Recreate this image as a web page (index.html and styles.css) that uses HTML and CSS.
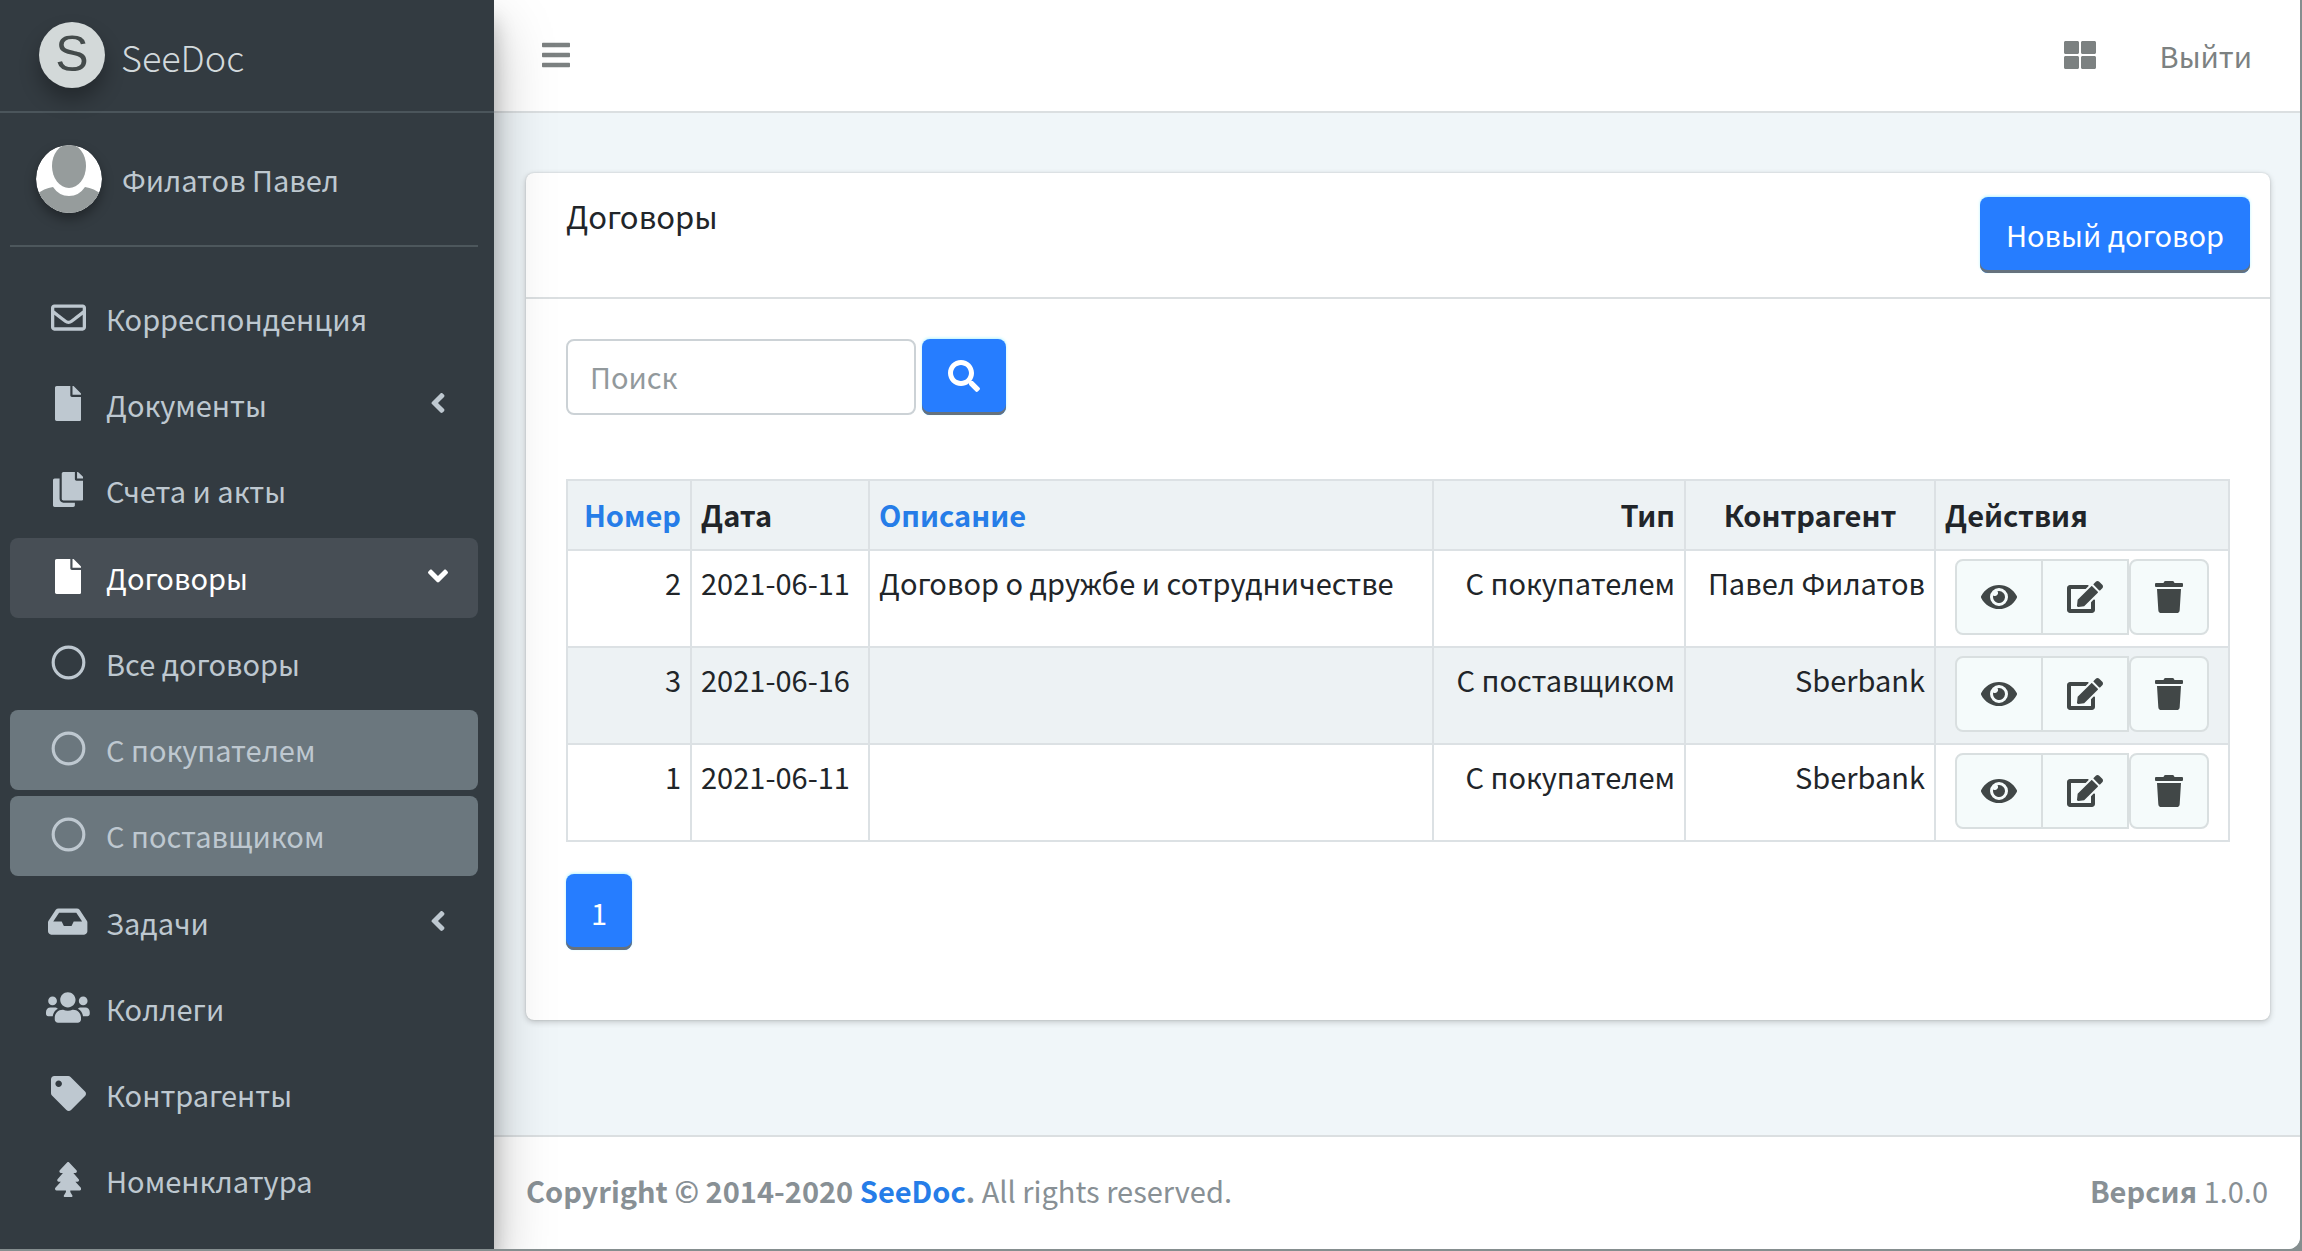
FILE: index.html
```html
<!DOCTYPE html>
<html lang="ru">
<head>
<meta charset="utf-8">
<meta name="viewport" content="width=device-width, initial-scale=1">
<title>SeeDoc — Договоры</title>
<link rel="stylesheet" href="styles.css">
</head>
<body>
<svg class="sprite" aria-hidden="true">
  <symbol id="i-file" viewBox="0 0 384 512"><path d="M224 136V0H24C10.700 0 0 10.700 0 24v464c0 13.300 10.700 24 24 24h336c13.300 0 24-10.700 24-24V160H248c-13.200 0-24-10.800-24-24zm160-14.100v6.100H256V0h6.100c6.400 0 12.500 2.500 17 7l97.900 98c4.500 4.500 7 10.600 7 16.900z"/></symbol>
  <symbol id="i-circle" viewBox="0 0 512 512"><circle cx="256" cy="256" r="224" fill="none" stroke="currentColor" stroke-width="46"/></symbol>
  <symbol id="i-angle-left" viewBox="0 0 256 512"><path d="M31.700 239l136-136c9.400-9.400 24.600-9.400 33.900 0l22.600 22.600c9.400 9.400 9.400 24.600 0 33.900L127.900 256l96.400 96.400c9.400 9.400 9.400 24.600 0 33.900L201.700 409c-9.400 9.400-24.600 9.400-33.900 0l-136-136c-9.500-9.400-9.500-24.600-.1-34z"/></symbol>
  <symbol id="i-angle-down" viewBox="0 0 320 512"><path d="M143 352.300L7 216.300c-9.400-9.400-9.400-24.600 0-33.900l22.600-22.600c9.400-9.400 24.600-9.400 33.900 0l96.400 96.400 96.400-96.400c9.400-9.400 24.600-9.400 33.900 0l22.600 22.600c9.400 9.400 9.400 24.600 0 33.900l-136 136c-9.200 9.400-24.400 9.400-33.800 0z"/></symbol>
  <symbol id="i-eye" viewBox="0 0 576 512"><path d="M572.520 241.400C518.290 135.590 410.930 64 288 64S57.680 135.640 3.480 241.410a32.350 32.350 0 0 0 0 29.190C57.710 376.410 165.070 448 288 448s230.320-71.640 284.520-177.410a32.350 32.350 0 0 0 0-29.190zM288 400a144 144 0 1 1 144-144 143.930 143.930 0 0 1-144 144zm0-240a95.310 95.310 0 0 0-25.310 3.790 47.850 47.850 0 0 1-66.900 66.900A95.780 95.780 0 1 0 288 160z"/></symbol>
  <symbol id="i-edit" viewBox="0 0 576 512"><path d="M402.600 83.200l90.200 90.200c3.800 3.800 3.800 10 0 13.800L274.400 405.600l-92.800 10.300c-12.400 1.400-22.900-9.100-21.500-21.500l10.300-92.800L388.800 83.200c3.800-3.800 10-3.800 13.800 0zm162-22.900l-48.800-48.800c-15.200-15.200-39.900-15.200-55.200 0l-35.400 35.400c-3.800 3.800-3.800 10 0 13.800l90.200 90.200c3.800 3.800 10 3.800 13.800 0l35.400-35.400c15.200-15.300 15.200-40 0-55.200zM384 346.200V448H64V128h229.800c3.200 0 6.200-1.300 8.500-3.500l40-40c7.600-7.600 2.200-20.500-8.500-20.500H48C21.500 64 0 85.500 0 112v352c0 26.500 21.500 48 48 48h352c26.500 0 48-21.500 48-48V306.200c0-10.700-12.900-16-20.500-8.500l-40 40c-2.200 2.300-3.500 5.300-3.500 8.500z"/></symbol>
  <symbol id="i-trash" viewBox="0 0 448 512"><path d="M432 32H312l-9.400-18.700A24 24 0 0 0 281.100 0H166.800a23.720 23.720 0 0 0-21.400 13.300L136 32H16A16 16 0 0 0 0 48v32a16 16 0 0 0 16 16h416a16 16 0 0 0 16-16V48a16 16 0 0 0-16-16zM53.200 467a48 48 0 0 0 47.900 45h245.800a48 48 0 0 0 47.900-45L416 128H32z"/></symbol>
</svg>

<div class="page">
  <aside class="sidebar">
    <a class="brand" href="#">
      <span class="brand-logo" aria-hidden="true">S</span>
      <span class="brand-name">SeeDoc</span>
    </a>
    <div class="user">
      <svg class="avatar" viewBox="0 0 66 68" aria-hidden="true">
        <clipPath id="avatar-clip"><rect width="66" height="68" rx="33" ry="34"/></clipPath>
        <g clip-path="url(#avatar-clip)">
          <rect width="66" height="68" fill="#fff"/>
          <ellipse cx="33" cy="21" rx="17" ry="22" fill="#969c9c"/>
          <path d="M0 50Q8 43 17 42Q23 51 33 51Q43 51 49 42Q58 43 66 50V68H0Z" fill="#969c9c"/>
        </g>
      </svg>
      <a class="user-name" href="#">Филатов Павел</a>
    </div>
    <nav class="menu" aria-label="Главное меню">
      <ul class="menu-list">
        <li><a class="menu-link" href="#"><span class="menu-icon"><svg class="icon" viewBox="0 0 512 512"><path d="M464 64H48C21.490 64 0 85.490 0 112v288c0 26.510 21.490 48 48 48h416c26.510 0 48-21.490 48-48V112c0-26.510-21.490-48-48-48zm0 48v40.805c-22.422 18.259-58.168 46.651-134.587 106.490-16.841 13.247-50.201 45.072-73.413 44.701-23.208.375-56.579-31.459-73.413-44.701C106.180 199.465 70.425 171.067 48 152.805V112h416zM48 400V214.398c22.914 18.251 55.409 43.862 104.938 82.646 21.857 17.205 60.134 55.186 103.062 54.955 42.717.231 80.509-37.199 103.053-54.947 49.528-38.783 82.032-64.401 104.947-82.653V400H48z"/></svg></span>Корреспонденция</a></li>
        <li><a class="menu-link" href="#"><span class="menu-icon"><svg class="icon" viewBox="0 0 384 512"><use href="#i-file"/></svg></span>Документы<svg class="icon menu-arrow" viewBox="0 0 256 512"><use href="#i-angle-left"/></svg></a></li>
        <li><a class="menu-link" href="#"><span class="menu-icon"><svg class="icon" viewBox="0 0 448 512"><path d="M320 448v40c0 13.255-10.745 24-24 24H24c-13.255 0-24-10.745-24-24V120c0-13.255 10.745-24 24-24h72v296c0 30.879 25.121 56 56 56h168zm0-344V0H152c-13.255 0-24 10.745-24 24v368c0 13.255 10.745 24 24 24h272c13.255 0 24-10.745 24-24V128H344c-13.200 0-24-10.800-24-24zm120.971-31.029L375.029 7.029A24 24 0 0 0 358.059 0H352v96h96v-6.059a24 24 0 0 0-7.029-16.970z"/></svg></span>Счета и акты</a></li>
        <li class="menu-group">
          <a class="menu-link is-open" href="#"><span class="menu-icon"><svg class="icon" viewBox="0 0 384 512"><use href="#i-file"/></svg></span>Договоры<svg class="icon menu-arrow" viewBox="0 0 320 512"><use href="#i-angle-down"/></svg></a>
          <ul class="menu-list">
            <li><a class="menu-link" href="#"><span class="menu-icon"><svg class="icon" viewBox="0 0 512 512"><use href="#i-circle"/></svg></span>Все договоры</a></li>
            <li><a class="menu-link is-marked" href="#"><span class="menu-icon"><svg class="icon" viewBox="0 0 512 512"><use href="#i-circle"/></svg></span>С покупателем</a></li>
            <li><a class="menu-link is-marked" href="#"><span class="menu-icon"><svg class="icon" viewBox="0 0 512 512"><use href="#i-circle"/></svg></span>С поставщиком</a></li>
          </ul>
        </li>
        <li><a class="menu-link" href="#"><span class="menu-icon"><svg class="icon" viewBox="0 0 576 512"><path d="M567.938 243.908L462.250 85.374A48.003 48.003 0 0 0 422.311 64H153.689a48 48 0 0 0-39.938 21.374L8.062 243.908A47.994 47.994 0 0 0 0 270.533V400c0 26.510 21.490 48 48 48h480c26.510 0 48-21.490 48-48V270.533a47.994 47.994 0 0 0-8.062-26.625zM162.252 128h251.497l85.333 128H376l-32 64H232l-32-64H76.918l85.334-128z"/></svg></span>Задачи<svg class="icon menu-arrow" viewBox="0 0 256 512"><use href="#i-angle-left"/></svg></a></li>
        <li><a class="menu-link" href="#"><span class="menu-icon"><svg class="icon" viewBox="0 0 640 512"><path d="M96 224c35.300 0 64-28.700 64-64s-28.700-64-64-64-64 28.700-64 64 28.700 64 64 64zm448 0c35.300 0 64-28.700 64-64s-28.700-64-64-64-64 28.700-64 64 28.700 64 64 64zm32 32h-64c-17.600 0-33.500 7.100-45.100 18.600 40.300 22.100 68.900 62 75.100 109.400h66c17.700 0 32-14.300 32-32v-32c0-35.300-28.700-64-64-64zm-256 0c61.900 0 112-50.100 112-112S381.900 32 320 32 208 82.100 208 144s50.100 112 112 112zm76.800 32h-8.300c-20.800 10-43.900 16-68.500 16s-47.600-6-68.500-16h-8.300C179.600 288 128 339.600 128 403.200V432c0 26.500 21.500 48 48 48h288c26.500 0 48-21.500 48-48v-28.800c0-63.600-51.600-115.200-115.200-115.200zm-223.700-13.400C161.500 263.100 145.600 256 128 256H64c-35.300 0-64 28.700-64 64v32c0 17.700 14.300 32 32 32h65.900c6.300-47.400 34.900-87.300 75.200-109.400z"/></svg></span>Коллеги</a></li>
        <li><a class="menu-link" href="#"><span class="menu-icon"><svg class="icon" viewBox="0 0 512 512"><path d="M0 252.118V48C0 21.490 21.490 0 48 0h204.118a48 48 0 0 1 33.941 14.059l211.882 211.882c18.745 18.745 18.745 49.137 0 67.882L293.823 497.941c-18.745 18.745-49.137 18.745-67.882 0L14.059 286.059A48 48 0 0 1 0 252.118zM112 64c-26.510 0-48 21.490-48 48s21.490 48 48 48 48-21.490 48-48-21.490-48-48-48z"/></svg></span>Контрагенты</a></li>
        <li><a class="menu-link" href="#"><span class="menu-icon"><svg class="icon" viewBox="0 0 384 512"><path d="M378.310 378.490L298.420 288h30.630c9.010 0 16.980-5 20.780-13.060 3.800-8.040 2.550-17.260-3.280-24.050L268.420 160h28.890c9.100 0 17.300-5.350 20.860-13.610 3.520-8.130 1.860-17.590-4.240-24.080L203.660 4.830c-6.030-6.450-17.280-6.450-23.320 0L70.060 122.310c-6.100 6.490-7.750 15.950-4.240 24.080C69.380 154.650 77.590 160 86.690 160h28.890l-78.140 90.910c-5.810 6.780-7.060 15.990-3.270 24.040C37.970 283 45.930 288 54.950 288h30.630L5.690 378.490c-6 6.790-7.360 16.090-3.560 24.260 3.750 8.050 12 13.250 21.010 13.250H160v24.450l-30.290 48.400c-5.320 10.640 2.420 23.160 14.310 23.160h95.960c11.890 0 19.630-12.520 14.310-23.160L224 440.450V416h136.860c9.010 0 17.260-5.200 21.010-13.250 3.800-8.170 2.440-17.470-3.560-24.260z"/></svg></span>Номенклатура</a></li>
      </ul>
    </nav>
  </aside>

  <div class="main">
    <header class="topbar">
      <button class="topbar-button" type="button" aria-label="Меню"><svg class="icon" viewBox="0 0 448 512"><path d="M16 132h416c8.837 0 16-7.163 16-16V76c0-8.837-7.163-16-16-16H16C7.163 60 0 67.163 0 76v40c0 8.837 7.163 16 16 16zm0 160h416c8.837 0 16-7.163 16-16v-40c0-8.837-7.163-16-16-16H16c-8.837 0-16 7.163-16 16v40c0 8.837 7.163 16 16 16zm0 160h416c8.837 0 16-7.163 16-16v-40c0-8.837-7.163-16-16-16H16c-8.837 0-16 7.163-16 16v40c0 8.837 7.163 16 16 16z"/></svg></button>
      <div class="topbar-right">
        <button class="topbar-button" type="button" aria-label="Приложения"><svg class="icon" viewBox="0 0 512 512"><path d="M296 32h192c13.255 0 24 10.745 24 24v160c0 13.255-10.745 24-24 24H296c-13.255 0-24-10.745-24-24V56c0-13.255 10.745-24 24-24zm-80 0H24C10.745 32 0 42.745 0 56v160c0 13.255 10.745 24 24 24h192c13.255 0 24-10.745 24-24V56c0-13.255-10.745-24-24-24zM0 296v160c0 13.255 10.745 24 24 24h192c13.255 0 24-10.745 24-24V296c0-13.255-10.745-24-24-24H24c-13.255 0-24 10.745-24 24zm296 184h192c13.255 0 24-10.745 24-24V296c0-13.255-10.745-24-24-24H296c-13.255 0-24 10.745-24 24v160c0 13.255 10.745 24 24 24z"/></svg></button>
        <a class="logout" href="#">Выйти</a>
      </div>
    </header>

    <main class="content">
      <section class="card">
        <div class="card-header">
          <h1 class="card-title">Договоры</h1>
          <button class="btn btn-primary" type="button">Новый договор</button>
        </div>
        <div class="card-body">
          <form class="search">
            <input class="search-input" type="search" placeholder="Поиск" aria-label="Поиск">
            <button class="btn btn-primary" type="submit" aria-label="Найти"><svg class="icon" viewBox="0 0 512 512"><path d="M505 442.700L405.300 343c-4.500-4.500-10.600-7-17-7H372c27.600-35.300 44-79.700 44-128C416 93.100 322.900 0 208 0S0 93.100 0 208s93.100 208 208 208c48.300 0 92.700-16.400 128-44v16.300c0 6.400 2.500 12.500 7 17l99.700 99.700c9.400 9.400 24.600 9.400 33.900 0l28.300-28.300c9.400-9.400 9.400-24.600.1-34zM208 336c-70.700 0-128-57.200-128-128 0-70.700 57.200-128 128-128 70.700 0 128 57.200 128 128 0 70.700-57.200 128-128 128z"/></svg></button>
          </form>

          <table class="grid">
            <colgroup><col class="col-number"><col class="col-date"><col><col class="col-type"><col class="col-partner"><col class="col-actions"></colgroup>
            <thead>
              <tr><th class="right"><a href="#">Номер</a></th><th>Дата</th><th><a href="#">Описание</a></th><th class="right">Тип</th><th class="center">Контрагент</th><th>Действия</th></tr>
            </thead>
            <tbody>
              <tr>
                <td class="right">2</td><td>2021-06-11</td><td>Договор о дружбе и сотрудничестве</td><td class="right">С покупателем</td><td class="right">Павел Филатов</td>
                <td><div class="actions"><button class="action" type="button" aria-label="Просмотр"><svg class="icon" viewBox="0 0 576 512"><use href="#i-eye"/></svg></button><button class="action" type="button" aria-label="Изменить"><svg class="icon" viewBox="0 0 576 512"><use href="#i-edit"/></svg></button><button class="action" type="button" aria-label="Удалить"><svg class="icon" viewBox="0 0 448 512"><use href="#i-trash"/></svg></button></div></td>
              </tr>
              <tr>
                <td class="right">3</td><td>2021-06-16</td><td></td><td class="right">С поставщиком</td><td class="right">Sberbank</td>
                <td><div class="actions"><button class="action" type="button" aria-label="Просмотр"><svg class="icon" viewBox="0 0 576 512"><use href="#i-eye"/></svg></button><button class="action" type="button" aria-label="Изменить"><svg class="icon" viewBox="0 0 576 512"><use href="#i-edit"/></svg></button><button class="action" type="button" aria-label="Удалить"><svg class="icon" viewBox="0 0 448 512"><use href="#i-trash"/></svg></button></div></td>
              </tr>
              <tr>
                <td class="right">1</td><td>2021-06-11</td><td></td><td class="right">С покупателем</td><td class="right">Sberbank</td>
                <td><div class="actions"><button class="action" type="button" aria-label="Просмотр"><svg class="icon" viewBox="0 0 576 512"><use href="#i-eye"/></svg></button><button class="action" type="button" aria-label="Изменить"><svg class="icon" viewBox="0 0 576 512"><use href="#i-edit"/></svg></button><button class="action" type="button" aria-label="Удалить"><svg class="icon" viewBox="0 0 448 512"><use href="#i-trash"/></svg></button></div></td>
              </tr>
            </tbody>
          </table>

          <button class="btn btn-primary btn-page" type="button" aria-current="page">1</button>
        </div>
      </section>
    </main>

    <footer class="footer">
      <div><strong>Copyright © 2014-2020 <a href="#">SeeDoc</a>.</strong> All rights reserved.</div>
      <div><strong>Версия</strong> 1.0.0</div>
    </footer>
  </div>
</div>
</body>
</html>
```
FILE: styles.css
```css
* { box-sizing: border-box; }

html { background: #858e8f; }

body {
  margin: 0;
  color: #212529;
  font: 29px/48px "Noto Sans CJK SC", "Noto Sans", sans-serif;
}

a { color: #267de8; text-decoration: none; }
button, input { font: inherit; }
button { cursor: pointer; }
ul { list-style: none; margin: 0; padding: 0; }

.sprite { display: none; }
.icon { display: block; height: 35px; fill: currentColor; }

/* Frame */
.page {
  display: flex;
  min-height: calc(100vh - 2px);
  margin: 0 2px 2px 0;
  border-radius: 0 0 12px 0;
  overflow: hidden;
  background: #f0f6f9;
}

/* Sidebar */
.sidebar {
  position: relative;
  z-index: 1;
  flex: 0 0 494px;
  background: #333b41;
  box-shadow: 0 28px 56px rgba(0, 0, 0, .25), 0 20px 20px rgba(0, 0, 0, .22);
}

.brand {
  display: flex;
  align-items: center;
  gap: 16px;
  height: 113px;
  padding: 0 39px 2px;
  border-bottom: 2px solid #4b555b;
  color: #d2d9dc;
}

.brand-logo {
  width: 66px;
  height: 66px;
  border-radius: 50%;
  background: #d3d9d9;
  box-shadow: 0 12px 20px rgba(0, 0, 0, .3);
  color: #444b4b;
  font: 50px/64px "Liberation Sans", sans-serif;
  text-align: center;
}

.brand-name { padding-top: 2px; font-size: 36px; font-weight: 300; }

.user {
  display: flex;
  align-items: center;
  gap: 20px;
  height: 134px;
  margin: 0 16px 0 10px;
  padding-left: 26px;
  border-bottom: 2px solid #4d575c;
}

.avatar {
  width: 66px;
  height: 68px;
  border-radius: 50%;
  box-shadow: 0 6px 12px rgba(0, 0, 0, .35);
}

.user-name { color: #bec8d0; }

.menu { padding: 32px 16px 0 10px; }
.menu-list { display: grid; gap: 6px; }
.menu-list .menu-list { margin-top: 6px; }
.menu-group { padding: 1px 0; }

.menu-link {
  display: flex;
  align-items: center;
  height: 80px;
  padding: 0 30px 2px 0;
  border-radius: 8px;
  color: #bec8d0;
}

.menu-icon {
  display: flex;
  flex: 0 0 96px;
  justify-content: center;
  padding: 0 0 2px 20px;
}

.menu-arrow { width: 20px; margin: 0 0 2px auto; height: 32px; }
.menu-link.is-open { background: #474e55; color: #fff; }
.menu-link.is-marked { background: #6b777e; }

/* Top bar */
.main { display: flex; flex: 1; flex-direction: column; min-width: 0; }

.topbar {
  display: flex;
  align-items: center;
  justify-content: space-between;
  height: 113px;
  padding: 0 48px 2px;
  border-bottom: 2px solid #dbdfe1;
  background: #fff;
}

.topbar-right { display: flex; align-items: center; gap: 64px; }
.topbar-button { padding: 0; border: 0; background: none; color: #7c8181; }
.topbar-button .icon { height: 32px; }
.logout { color: #7c8181; }

/* Card */
.content { flex: 1; padding: 60px 30px 60px 32px; }

.card {
  border-radius: 8px;
  background: #fff;
  box-shadow: 0 0 2px rgba(0, 0, 0, .15), 0 2px 6px rgba(0, 0, 0, .2);
}

.card-header {
  display: flex;
  align-items: flex-start;
  justify-content: space-between;
  padding: 24px 20px 24px 40px;
  border-bottom: 2px solid #dbdfe1;
}

.card-title { margin: 0; font-size: 31px; font-weight: 400; line-height: 38px; }
.card-body { padding: 40px 40px 70px; }

.btn {
  height: 76px;
  padding: 0 26px 2px;
  border: 0;
  border-radius: 8px;
}

.btn-primary {
  background: #267dff;
  box-shadow: inset 0 -3px #66727d, 0 -1px 3px #b5f4ff;
  color: #fff;
}

.btn-page { width: 66px; padding: 0; }
.btn .icon { height: 32px; }

/* Search */
.search { display: flex; gap: 6px; margin-bottom: 64px; }

.search-input {
  width: 350px;
  height: 76px;
  padding: 0 22px 2px;
  border: 2px solid #ccd2d6;
  border-radius: 8px;
  background: #fff;
  color: #495057;
}

.search-input::placeholder { color: #92999c; opacity: 1; }

/* Table */
.grid {
  width: 100%;
  margin-bottom: 32px;
  border-collapse: collapse;
  table-layout: fixed;
}

.grid th, .grid td {
  border: 2px solid #dce1e4;
  padding: 8px 9px 11px;
  line-height: 46px;
  text-align: left;
  vertical-align: top;
}

.grid th { padding: 10px 9px 12px; background: #edf2f4; font-weight: 700; }
.grid tbody tr:nth-child(even) { background: #edf2f4; }
.grid .right { text-align: right; }
.grid .center { text-align: center; }

.col-number { width: 124px; }
.col-date { width: 178px; }
.col-type { width: 252px; }
.col-partner { width: 250px; }
.col-actions { width: 294px; }

.actions { display: flex; justify-content: center; }

.action {
  height: 76px;
  padding: 0 24px;
  border: 2px solid #d9dfe0;
  background: #f5fbfb;
  color: #414747;
}

.action + .action { margin-left: -2px; }
.action .icon { height: 32px; }
.action:first-child { border-radius: 8px 0 0 8px; }
.action:last-child { margin-left: 0; border-radius: 8px; }

/* Footer */
.footer {
  display: flex;
  align-items: center;
  justify-content: space-between;
  height: 114px;
  padding: 0 32px 6px;
  border-top: 2px solid #dbdfe1;
  background: #fff;
  color: #889095;
}
```
